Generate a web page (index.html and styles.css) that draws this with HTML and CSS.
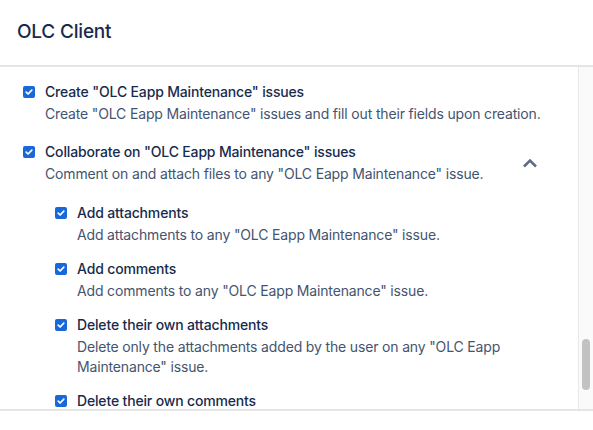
FILE: index.html
```html
<!DOCTYPE html>
<html lang="en">
<head>
<meta charset="utf-8">
<title>OLC Client</title>
<link rel="stylesheet" href="styles.css">
</head>
<body>
<div class="panel">
  <header class="panel-header">
    <h1 class="panel-title">OLC Client</h1>
  </header>
  <div class="scroll-area">
    <div class="scroll-content">
      <div class="perm">
        <div class="perm-row">
          <span class="cb"><svg viewBox="0 0 12 12" width="12" height="12"><path d="M3.2 6.2 L5.1 8 L8.8 4.2" fill="none" stroke="#fff" stroke-width="1.7" stroke-linecap="round" stroke-linejoin="round"/></svg></span>
          <div class="perm-text">
            <div class="perm-title">Create "OLC Eapp Maintenance" issues</div>
            <div class="perm-desc">Create "OLC Eapp Maintenance" issues and fill out their fields upon creation.</div>
          </div>
        </div>
      </div>
      <div class="perm">
        <div class="perm-row">
          <span class="cb"><svg viewBox="0 0 12 12" width="12" height="12"><path d="M3.2 6.2 L5.1 8 L8.8 4.2" fill="none" stroke="#fff" stroke-width="1.7" stroke-linecap="round" stroke-linejoin="round"/></svg></span>
          <div class="perm-text">
            <div class="perm-title">Collaborate on "OLC Eapp Maintenance" issues</div>
            <div class="perm-desc">Comment on and attach files to any "OLC Eapp Maintenance" issue.</div>
          </div>
          <span class="chevron"><svg viewBox="0 0 16 10" width="16" height="10"><path d="M2 8.5 L8 2.5 L14 8.5" fill="none" stroke="#5e6c84" stroke-width="2.6" stroke-linejoin="miter"/></svg></span>
        </div>
        <div class="children">
          <div class="perm sub">
            <div class="perm-row">
              <span class="cb"><svg viewBox="0 0 12 12" width="12" height="12"><path d="M3.2 6.2 L5.1 8 L8.8 4.2" fill="none" stroke="#fff" stroke-width="1.7" stroke-linecap="round" stroke-linejoin="round"/></svg></span>
              <div class="perm-text">
                <div class="perm-title">Add attachments</div>
                <div class="perm-desc">Add attachments to any "OLC Eapp Maintenance" issue.</div>
              </div>
            </div>
          </div>
          <div class="perm sub">
            <div class="perm-row">
              <span class="cb"><svg viewBox="0 0 12 12" width="12" height="12"><path d="M3.2 6.2 L5.1 8 L8.8 4.2" fill="none" stroke="#fff" stroke-width="1.7" stroke-linecap="round" stroke-linejoin="round"/></svg></span>
              <div class="perm-text">
                <div class="perm-title">Add comments</div>
                <div class="perm-desc">Add comments to any "OLC Eapp Maintenance" issue.</div>
              </div>
            </div>
          </div>
          <div class="perm sub">
            <div class="perm-row">
              <span class="cb"><svg viewBox="0 0 12 12" width="12" height="12"><path d="M3.2 6.2 L5.1 8 L8.8 4.2" fill="none" stroke="#fff" stroke-width="1.7" stroke-linecap="round" stroke-linejoin="round"/></svg></span>
              <div class="perm-text narrow">
                <div class="perm-title">Delete their own attachments</div>
                <div class="perm-desc">Delete only the attachments added by the user on any "OLC Eapp Maintenance" issue.</div>
              </div>
            </div>
          </div>
          <div class="perm sub">
            <div class="perm-row">
              <span class="cb"><svg viewBox="0 0 12 12" width="12" height="12"><path d="M3.2 6.2 L5.1 8 L8.8 4.2" fill="none" stroke="#fff" stroke-width="1.7" stroke-linecap="round" stroke-linejoin="round"/></svg></span>
              <div class="perm-text">
                <div class="perm-title">Delete their own comments</div>
              </div>
            </div>
          </div>
        </div>
      </div>
    </div>
    <div class="scrollbar"><div class="thumb"></div></div>
  </div>
</div>
</body>
</html>
```
FILE: styles.css
```css
html, body {
  margin: 0;
  padding: 0;
  background: #fff;
}
body {
  font-family: Inter, "Noto Sans", "Liberation Sans", sans-serif;
  color: #172b4d;
  width: 593px;
  height: 430px;
  overflow: hidden;
}
.panel {
  display: flex;
  flex-direction: column;
}
.panel-header {
  height: 67px;
  box-sizing: border-box;
  border-bottom: 2px solid #e4e5e9;
  display: flex;
  align-items: center;
  padding-left: 17px;
  padding-bottom: 3px;
}
.panel-title {
  margin: 0;
  font-size: 19px;
  font-weight: 500;
  color: #172b4d;
  letter-spacing: -0.2px;
}
.scroll-area {
  height: 344px;
  box-sizing: border-box;
  border-bottom: 2px solid #e4e5e9;
  display: flex;
  overflow: hidden;
}
.scroll-content {
  flex: 1;
  padding: 15px 0 0 23px;
  overflow: hidden;
}
.scrollbar {
  width: 14px;
  flex: none;
  background: #fafafa;
  border-left: 1px solid #e8e8e8;
  position: relative;
}
.thumb {
  position: absolute;
  left: 3px;
  width: 8px;
  top: 272px;
  height: 51px;
  border-radius: 4px;
  background: #c2c2c2;
}
.perm {
  margin-bottom: 18px;
}
.perm.sub {
  margin-bottom: 14px;
}
.perm-row {
  display: flex;
  align-items: flex-start;
}
.cb {
  flex: none;
  width: 12px;
  height: 12px;
  margin-top: 4px;
  margin-right: 10px;
  background: #1868db;
  border-radius: 2px;
  display: flex;
}
.cb svg {
  display: block;
}
.perm-text {
  flex: 1;
  font-size: 14px;
  line-height: 20px;
  letter-spacing: -0.16px;
}
.perm-text.narrow {
  max-width: 440px;
  flex: none;
}
.perm-title {
  font-weight: 500;
  color: #172b4d;
}
.perm-desc {
  margin-top: 2px;
  color: #44546f;
}
.chevron {
  flex: none;
  width: 16px;
  height: 10px;
  margin-top: 16px;
  margin-right: 40px;
  display: flex;
}
.children {
  margin-left: 32px;
  margin-top: 19px;
}
```
